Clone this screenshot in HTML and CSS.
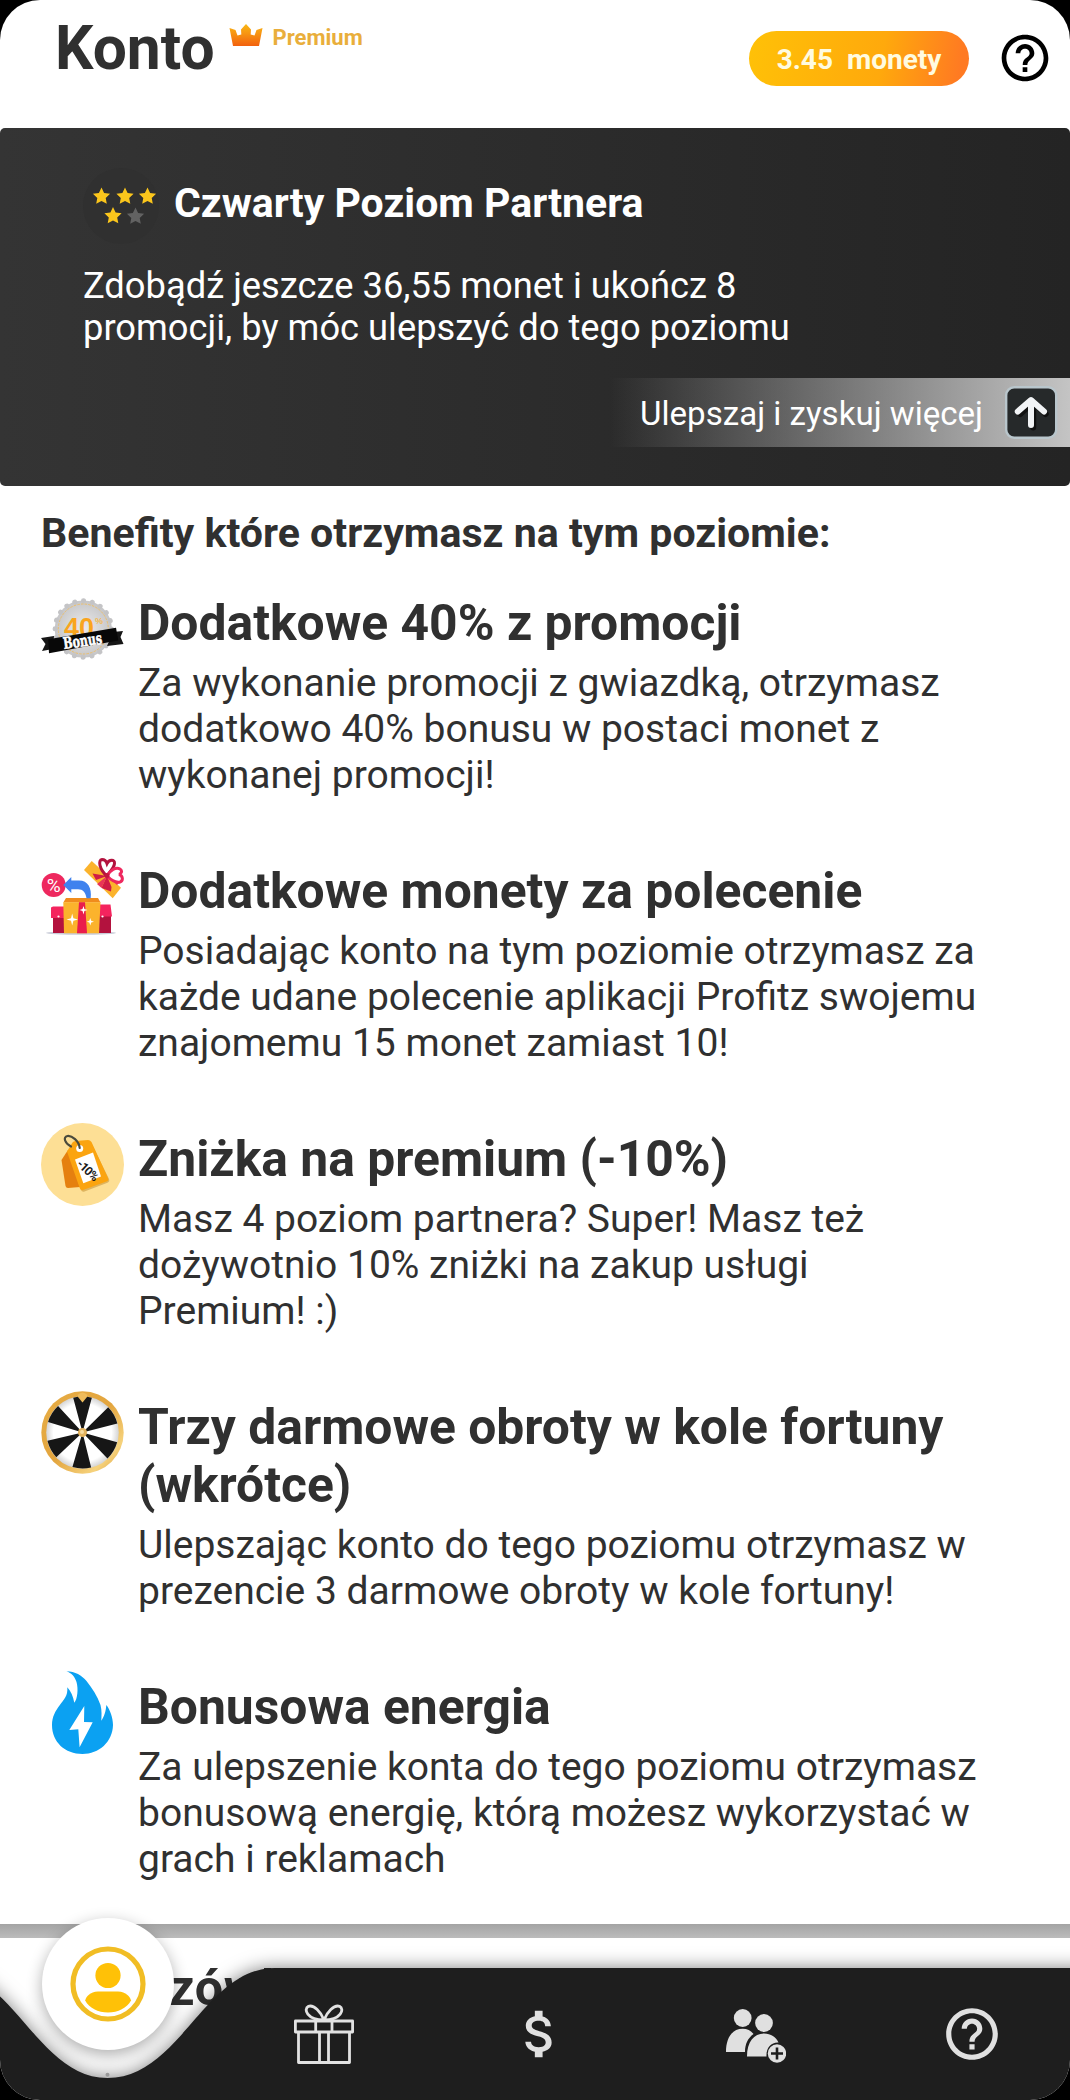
FILE: index.html
```html
<!DOCTYPE html>
<html lang="pl">
<head>
<meta charset="utf-8">
<title>Konto</title>
<link rel="stylesheet" href="styles.css">
</head>
<body>
<div class="screen">
  <header class="header">
    <h1 class="header-title">Konto</h1>
    <svg class="crown" viewBox="0 0 34 22">
      <defs><linearGradient id="crownFill" x1="0" y1="0" x2="0" y2="1"><stop offset="0" stop-color="#f9b915"/><stop offset=".45" stop-color="#f79312"/><stop offset="1" stop-color="#f2600e"/></linearGradient></defs>
      <path d="M.5 4 6.500 6 8.500 11.500 12.300 10.500 12 5.500 17 0 22 5.500 21.700 10.500 25.500 11.500 27.500 6 33.500 4 30 22H4z" fill="url(#crownFill)"/>
    </svg>
    <span class="premium">Premium</span>
    <div class="coins">3.45&nbsp; monety</div>
    <svg class="help" viewBox="0 0 24 24"><path d="M11 18h2v-2h-2v2zm1-16C6.480 2 2 6.480 2 12s4.480 10 10 10 10-4.480 10-10S17.520 2 12 2zm0 18c-4.410 0-8-3.590-8-8s3.590-8 8-8 8 3.590 8 8-3.590 8-8 8zm0-14c-2.210 0-4 1.790-4 4h2c0-1.100.9-2 2-2s2 .9 2 2c0 2-3 1.750-3 5h2c0-2.250 3-2.500 3-5 0-2.210-1.790-4-4-4z"/></svg>
  </header>

  <section class="level">
    <div class="level-head">
      <svg class="stars" viewBox="0 0 76 76">
        <defs><path id="star" d="M0-8.500 2.600-3 8.600-2.300 4.200 1.900 5.300 7.800 0 4.900-5.300 7.800-4.200 1.900-8.600-2.300-2.600-3z"/></defs>
        <circle cx="38" cy="38" r="38" fill="#303030"/>
        <g fill="#fbc61c"><use href="#star" x="18.500" y="28"/><use href="#star" x="42" y="28"/><use href="#star" x="64.500" y="28"/><use href="#star" x="30" y="47.500"/></g>
        <use href="#star" x="52.500" y="48" fill="#626262"/>
      </svg>
      <h2 class="level-title">Czwarty Poziom Partnera</h2>
    </div>
    <p class="level-text">Zdobądź jeszcze 36,55 monet i ukończ 8<br>promocji, by móc ulepszyć do tego poziomu</p>
    <div class="upgrade">
      <span class="upgrade-text">Ulepszaj i zyskuj więcej</span>
      <svg class="upgrade-icon" viewBox="0 0 53 53">
        <rect x="1.200" y="1.200" width="50" height="50.500" rx="8" fill="#26292a" stroke="#b9c6cc" stroke-width="2.400"/>
        <path d="M27 40V17M14 26.500 27 14.500 39.500 26.500" transform="translate(1.200 1.500)" fill="none" stroke="#111" stroke-width="6" stroke-linecap="round" stroke-linejoin="round"/>
        <path d="M26 39V16M12.800 25.500 26 14 39 25.500" fill="none" stroke="#f2f4f6" stroke-width="6" stroke-linecap="round" stroke-linejoin="round"/>
      </svg>
    </div>
  </section>

  <section class="benefits">
    <h3 class="benefits-title">Benefity które otrzymasz na tym poziomie:</h3>

    <article class="benefit">
      <svg class="benefit-icon" viewBox="0 0 83 83">
        <defs><radialGradient id="silver"><stop offset="0" stop-color="#ececec"/><stop offset="1" stop-color="#c6c6c8"/></radialGradient></defs>
        <circle cx="42.300" cy="42" r="28.600" fill="url(#silver)"/>
        <circle cx="42.300" cy="42" r="28.200" fill="none" stroke="#c4c4c6" stroke-width="5" stroke-linecap="round" stroke-dasharray=".1 8.758"/>
        <circle cx="42.300" cy="42" r="25" fill="none" stroke="#eebc60" stroke-width=".9" stroke-dasharray="2.500 1.200"/>
        <text x="23" y="49.500" class="badge-number">40</text>
        <text x="54" y="37" class="badge-percent">%</text>
        <path d="M0 51 13 49 12 62 1 64 4.500 57zM72 45 82 44 79.500 50 82.500 57 66 59z" fill="#161616"/>
        <path d="M7.300 52.300 75 40.700 77.300 53.500 8 66.300z" fill="#080808"/>
        <text x="23" y="62" transform="rotate(-8 23 62)" class="badge-bonus" textLength="39" lengthAdjust="spacingAndGlyphs">Bonus</text>
      </svg>
      <div class="benefit-body">
        <h4 class="benefit-title">Dodatkowe 40% z promocji</h4>
        <p class="benefit-text">Za wykonanie promocji z gwiazdką, otrzymasz<br>dodatkowo 40% bonusu w postaci monet z<br>wykonanej promocji!</p>
      </div>
    </article>

    <article class="benefit">
      <svg class="benefit-icon" viewBox="0 0 83 83">
        <ellipse cx="40" cy="78" rx="35" ry="1.800" fill="#c9ccd8"/>
        <path d="M12 56H24V78H12zM58 56H70V78H58z" fill="#b3123e"/>
        <path d="M10 52.500 12 51.500H24V63H10zM58 49.500H69.500L71 61.500H58z" fill="#f4245e"/>
        <path d="M25 43H57L59.500 47.500H22.300z" fill="#f08c1c"/>
        <path d="M22.300 47.300H59.500L58 78.300H23z" fill="#fbb32c"/>
        <path d="M38 47.300H44L46 78.300H36z" fill="#ea1d4c"/>
        <path d="M31.200 58.500 32.400 63.200 37 64.500 32.400 65.800 31.200 70.500 30 65.800 25.500 64.500 30 63.200zM42.500 51 43.400 54.100 46.500 55 43.400 55.900 42.500 59.500 41.500 55.900 38.500 55 41.500 54.100zM49.300 63 50.200 65.800 53 66.700 50.200 67.600 49.300 70.500 48.300 67.600 45.700 66.700 48.300 65.800z" fill="#fff"/>
        <circle cx="17.500" cy="61.500" r="1.100" fill="#fff"/><circle cx="61.500" cy="61.500" r="1.100" fill="#fff"/>
        <circle cx="12.700" cy="30" r="12" fill="#ee285e"/>
        <text x="12.700" y="36.500" text-anchor="middle" class="gift-percent">%</text>
        <path d="M22.300 30 30.300 22V25.500H38C47 25.500 51 33 49.700 43.300H45.500C44.500 37 42 34.300 37 34.300H30.300V38z" fill="#3f82ee"/>
        <path d="M50.700 6 80 32.700 71.700 43.300 43 15z" fill="#fbb32c"/>
        <path d="M66 21 51.500 18.500 55 25zM66 21 60.500 33 70 36.500 70.500 32z" fill="#d01c46"/>
        <path d="M66 21 56 29 60.500 33zM66 21 76 30 80 26z" fill="#e93558"/>
        <path d="M66 21C58 14 57 5 61 4.500 64 4.500 65.500 7 66 8.500 68 4.500 74 4 73.500 8.500 73 14 67 18 66 21z" fill="#fff" stroke="#b3123e" stroke-width="3"/>
        <path d="M66 21C69 15 75 12 79 14 82 16 80 19 78 19.500 82 20.500 82.500 26 79 27 74 28 69 24 66 21z" fill="#fff" stroke="#ee285e" stroke-width="3"/>
        <circle cx="66" cy="20.500" r="2.500" fill="#c3173f"/>
      </svg>
      <div class="benefit-body">
        <h4 class="benefit-title">Dodatkowe monety za polecenie</h4>
        <p class="benefit-text">Posiadając konto na tym poziomie otrzymasz za<br>każde udane polecenie aplikacji Profitz swojemu<br>znajomemu 15 monet zamiast 10!</p>
      </div>
    </article>

    <article class="benefit">
      <svg class="benefit-icon" viewBox="0 0 83 83">
        <circle cx="41.500" cy="41.500" r="41.500" fill="#fddf95"/>
        <path d="M27 27 20.500 37 24.500 63Q25 65 27 65L39 64z" fill="#e5800f"/>
        <path d="M26.500 29 32 20Q33 18.500 35 18.400L46 17.500Q48 17.500 49.500 19.500L67 55Q68 57.500 65.500 58.700L42.500 67.500Q40 68.300 39 66z" transform="translate(1 1)" fill="#c9983c" opacity=".6"/>
        <path d="M26 28.500 31.500 19.500Q32.500 18 34.500 17.900L47 17Q49 17 50.500 19L67 55Q68 57.500 65.500 58.500L42 67Q39.500 67.700 38.700 65z" fill="#fba410"/>
        <path d="M34 36.500 52 29.500 60 53.500 42.300 60.300z" fill="#fff"/>
        <circle cx="38.700" cy="25.500" r="3.500" fill="#fff"/>
        <path d="M38.700 25C38 18 31 12.500 26.500 13 21.500 14 24 20.500 30 23.500" fill="none" stroke="#4b4b3c" stroke-width="2.200" stroke-linecap="round"/>
        <text x="35" y="42" transform="rotate(43 35 42)" class="tag-discount" textLength="25">-10%</text>
      </svg>
      <div class="benefit-body">
        <h4 class="benefit-title">Zniżka na premium (-10%)</h4>
        <p class="benefit-text">Masz 4 poziom partnera? Super! Masz też<br>dożywotnio 10% zniżki na zakup usługi<br>Premium! :)</p>
      </div>
    </article>

    <article class="benefit">
      <svg class="benefit-icon" viewBox="0 0 83 83">
        <defs>
          <linearGradient id="gold" x1="0" y1="0" x2="1" y2="1"><stop offset="0" stop-color="#e7ad45"/><stop offset=".5" stop-color="#e3a53e"/><stop offset=".8" stop-color="#f6d27c"/><stop offset="1" stop-color="#d99a35"/></linearGradient>
          <radialGradient id="wheelShade"><stop offset=".8" stop-color="#fff"/><stop offset="1" stop-color="#d4d4d4"/></radialGradient>
        </defs>
        <circle cx="41.500" cy="41.500" r="41.200" fill="url(#gold)"/>
        <circle cx="41.500" cy="41.500" r="36.300" fill="url(#wheelShade)"/>
        <circle cx="41.500" cy="41.500" r="18" fill="none" stroke="#161616" stroke-width="36" stroke-dasharray="9.425" transform="rotate(-105 41.500 41.500)"/>
        <path d="M36.500 4Q41.500-1 46.500 4L46 6 41.500 11.500 37 6z" fill="#eebb5c"/>
        <circle cx="41.500" cy="41.500" r="4.500" fill="#e3b25c"/>
        <circle cx="41" cy="41" r="2" fill="#f7dca0"/>
      </svg>
      <div class="benefit-body">
        <h4 class="benefit-title">Trzy darmowe obroty w kole fortuny<br>(wkrótce)</h4>
        <p class="benefit-text">Ulepszając konto do tego poziomu otrzymasz w<br>prezencie 3 darmowe obroty w kole fortuny!</p>
      </div>
    </article>

    <article class="benefit">
      <svg class="benefit-icon" viewBox="0 0 83 83">
        <path d="M25.500.3C34 .5 41 4.500 45.500 10 51 17 56.500 25 59.500 34 61 40 60.500 45 60.300 49.700 63 46 65 40 65.300 34 69 38.500 72 47 72 54 71.500 71 58 83 41.500 83 24 83 11 71 11 54 11 45.500 14.500 40 18.500 34.500 23 28.500 27 25 26.300 16.300 30 20.500 32 25 33.300 31.700 36.500 28 37.500 18 35.500 11 34 6 30.500 2 25.500.3z" fill="#0ba1f2"/>
        <path d="M43.300 35 28.300 59 37.300 58.300 38.600 76.300 51.700 51.300 43 51z" fill="#fff"/>
      </svg>
      <div class="benefit-body">
        <h4 class="benefit-title">Bonusowa energia</h4>
        <p class="benefit-text">Za ulepszenie konta do tego poziomu otrzymasz<br>bonusową energię, którą możesz wykorzystać w<br>grach i reklamach</p>
      </div>
    </article>
  </section>

  <section class="tips">
    <h3 class="tips-title">Wskazówki do</h3>
  </section>

  <nav class="nav">
    <svg class="nav-shape" viewBox="0 0 1070 132">
      <path d="M-60 0C13 0 37 110 107.500 110 180 110 204 0 275 0H1110V160H-60z" fill="#1e1e1e"/>
      <circle cx="107.500" cy="106.700" r="2" fill="#999"/>
    </svg>
    <div class="nav-items">
      <div class="nav-item">
        <div class="nav-active">
          <svg class="user" viewBox="0 0 76 76">
            <circle cx="38" cy="38" r="35" fill="none" stroke="#f1bd24" stroke-width="5.200"/>
            <circle cx="38" cy="29.500" r="12.600" fill="#ffc107"/>
            <path d="M28 45.500H48C56 45.500 60 51 61 54.500 57 62 48 66.500 38 66.500S19 62 15.200 54.500C16 51 20 45.500 28 45.500z" fill="#ffc107"/>
          </svg>
        </div>
      </div>
      <div class="nav-item">
        <svg class="gift" viewBox="0 0 60 60" fill="none" stroke="#e2e2e2" stroke-width="2.800" stroke-linejoin="round">
          <path d="M1.400 17H58.600V28H1.400zM4.500 28V58.500H55.500V28M21.700 17V28M38 17V28M25.500 28V58.500M34.500 28V58.500"/>
          <path d="M30 16C27 8 20 .5 14.500 2.300 9 5 13 16 30 16M30 16C33 8 40 .5 45.500 2.300 51 5 47 16 30 16"/>
        </svg>
      </div>
      <div class="nav-item">
        <svg class="nav-icon" viewBox="0 0 24 24"><path d="M11.800 10.900c-2.270-.59-3-1.200-3-2.150 0-1.090 1.010-1.850 2.700-1.850 1.780 0 2.440.85 2.500 2.100h2.210c-.07-1.720-1.120-3.300-3.210-3.810V3h-3v2.160c-1.940.42-3.500 1.680-3.500 3.610 0 2.310 1.910 3.460 4.700 4.130 2.500.6 3 1.480 3 2.410 0 .69-.49 1.790-2.700 1.790-2.060 0-2.870-.92-2.980-2.100h-2.200c.12 2.190 1.760 3.420 3.680 3.830V21h3v-2.150c1.950-.37 3.500-1.500 3.500-3.550 0-2.840-2.430-3.810-4.700-4.400z"/></svg>
      </div>
      <div class="nav-item">
        <svg class="people" viewBox="0 0 60 54">
          <circle cx="16.700" cy="9" r="8.900"/><circle cx="38" cy="14" r="8.900"/>
          <path d="M0 43C0 29 6 19.800 16.700 19.800 21 19.800 25 21.500 27.500 25 22 29 19 35 19 43z"/>
          <path d="M21 47.500C21 33 28 24.500 38 24.500 45 24.500 50 28 52.500 33.500 45.500 33 40 38.500 40.500 47.500z"/>
          <circle cx="51" cy="44.500" r="9.200"/>
          <path d="M51 38.500V50.500M45 44.500H57" stroke="#1e1e1e" stroke-width="2.600"/>
        </svg>
      </div>
      <div class="nav-item">
        <svg class="nav-icon" viewBox="0 0 24 24"><path d="M11 18h2v-2h-2v2zm1-16C6.480 2 2 6.480 2 12s4.480 10 10 10 10-4.480 10-10S17.520 2 12 2zm0 18c-4.410 0-8-3.590-8-8s3.590-8 8-8 8 3.590 8 8-3.590 8-8 8zm0-14c-2.210 0-4 1.790-4 4h2c0-1.100.9-2 2-2s2 .9 2 2c0 2-3 1.750-3 5h2c0-2.250 3-2.500 3-5 0-2.210-1.790-4-4-4z"/></svg>
      </div>
    </div>
  </nav>
</div>
</body>
</html>
```
FILE: styles.css
```css
* { box-sizing: border-box; }
body { margin: 0; background: #000; font-family: Roboto, "Noto Sans", sans-serif; color: #303030; }
h1, h2, h3, h4, p { margin: 0; }
svg { display: block; flex: none; }

.screen { position: relative; width: 1070px; height: 2100px; background: #fff; border-radius: 40px; overflow: hidden; }

.header { display: flex; align-items: flex-start; height: 128px; padding: 0 17px 0 55px; }
.header-title { font-size: 60.5px; line-height: 72px; font-weight: 700; padding-top: 13px; }
.crown { width: 34px; height: 22px; margin: 24px 0 0 14px; }
.premium { margin: 25px 0 0 10px; font-size: 22px; line-height: 26px; font-weight: 700; color: #e9ae3b; }
.coins { width: 220px; height: 55px; margin: 31px 28px 0 auto; border-radius: 28px; background: linear-gradient(100deg, #ffc107 0%, #ffa90c 60%, #ff7a22 95%); color: #fffbe0; font-size: 28px; line-height: 58px; font-weight: 700; text-align: center; white-space: pre; }
.help { width: 56px; height: 56px; margin-top: 30px; }

.level { height: 358px; padding-top: 40px; border-radius: 5px; background: linear-gradient(90deg, #343434, #242424); color: #fff; }
.level-head { display: flex; align-items: center; height: 76px; padding-left: 83px; gap: 15px; }
.stars { width: 76px; height: 76px; }
.level-title { font-size: 41px; line-height: 48px; font-weight: 700; padding-bottom: 6px; }
.level-text { padding: 21px 0 0 83px; font-size: 36.3px; line-height: 42px; }
.upgrade { display: flex; align-items: center; justify-content: flex-end; gap: 22px; width: 460px; height: 69px; margin: 29px 0 0 auto; padding-right: 12px; background: linear-gradient(90deg, rgba(200,200,200,0), #c4c4c4); font-size: 33.1px; }
.upgrade-text { padding-top: 2px; }
.upgrade-icon { width: 53px; height: 53px; }

.benefits { height: 1438px; padding: 23px 0 0 41px; }
.benefits-title { font-size: 41.1px; line-height: 48px; font-weight: 700; margin-bottom: 37px; }
.benefit { display: flex; gap: 14px; margin-bottom: 64px; }
.benefit-icon { width: 83px; height: 83px; margin-top: -7px; }
.benefit-title { font-size: 49.8px; line-height: 58px; font-weight: 700; white-space: nowrap; }
.benefit-text { margin-top: 8px; font-size: 39px; line-height: 46px; white-space: nowrap; }
.badge-number { font: 700 27px "Liberation Sans", sans-serif; fill: #f9a51e; }
.badge-percent { font: 700 9px "Liberation Sans", sans-serif; fill: #f0b956; }
.badge-bonus { font: 700 16px "DejaVu Serif", serif; fill: #fff; stroke: #fff; stroke-width: .6px; }
.gift-percent { font: 400 19px Roboto, sans-serif; fill: #fff; }
.tag-discount { font: 700 12px Roboto, sans-serif; fill: #181818; }

.tips { padding: 34px 0 0 43px; background: linear-gradient(#a4a4a4, #bcbcbc) top / 100% 14px no-repeat; }
.tips-title { font-size: 50.3px; line-height: 60px; font-weight: 700; letter-spacing: .6px; }

.nav { position: absolute; left: 0; right: 0; bottom: 0; height: 132px; }
.nav-shape { position: absolute; left: 0; top: 0; width: 1070px; height: 132px; overflow: visible; filter: drop-shadow(0 0 9px rgba(0,0,0,.5)); }
.nav-items { position: relative; display: grid; grid-template-columns: repeat(5, 216px); height: 132px; }
.nav-item { display: flex; align-items: center; justify-content: center; }
.nav-active { display: flex; align-items: center; justify-content: center; width: 132px; height: 132px; margin-top: -100px; border-radius: 50%; background: #fff; box-shadow: 0 5px 16px rgba(0,0,0,.32); }
.user { width: 76px; height: 76px; }
.nav-icon { width: 62px; height: 62px; fill: #e0e0e0; }
.gift { width: 60px; height: 60px; }
.people { width: 60px; height: 54px; margin-top: 4px; fill: #e0e0e0; }
```
